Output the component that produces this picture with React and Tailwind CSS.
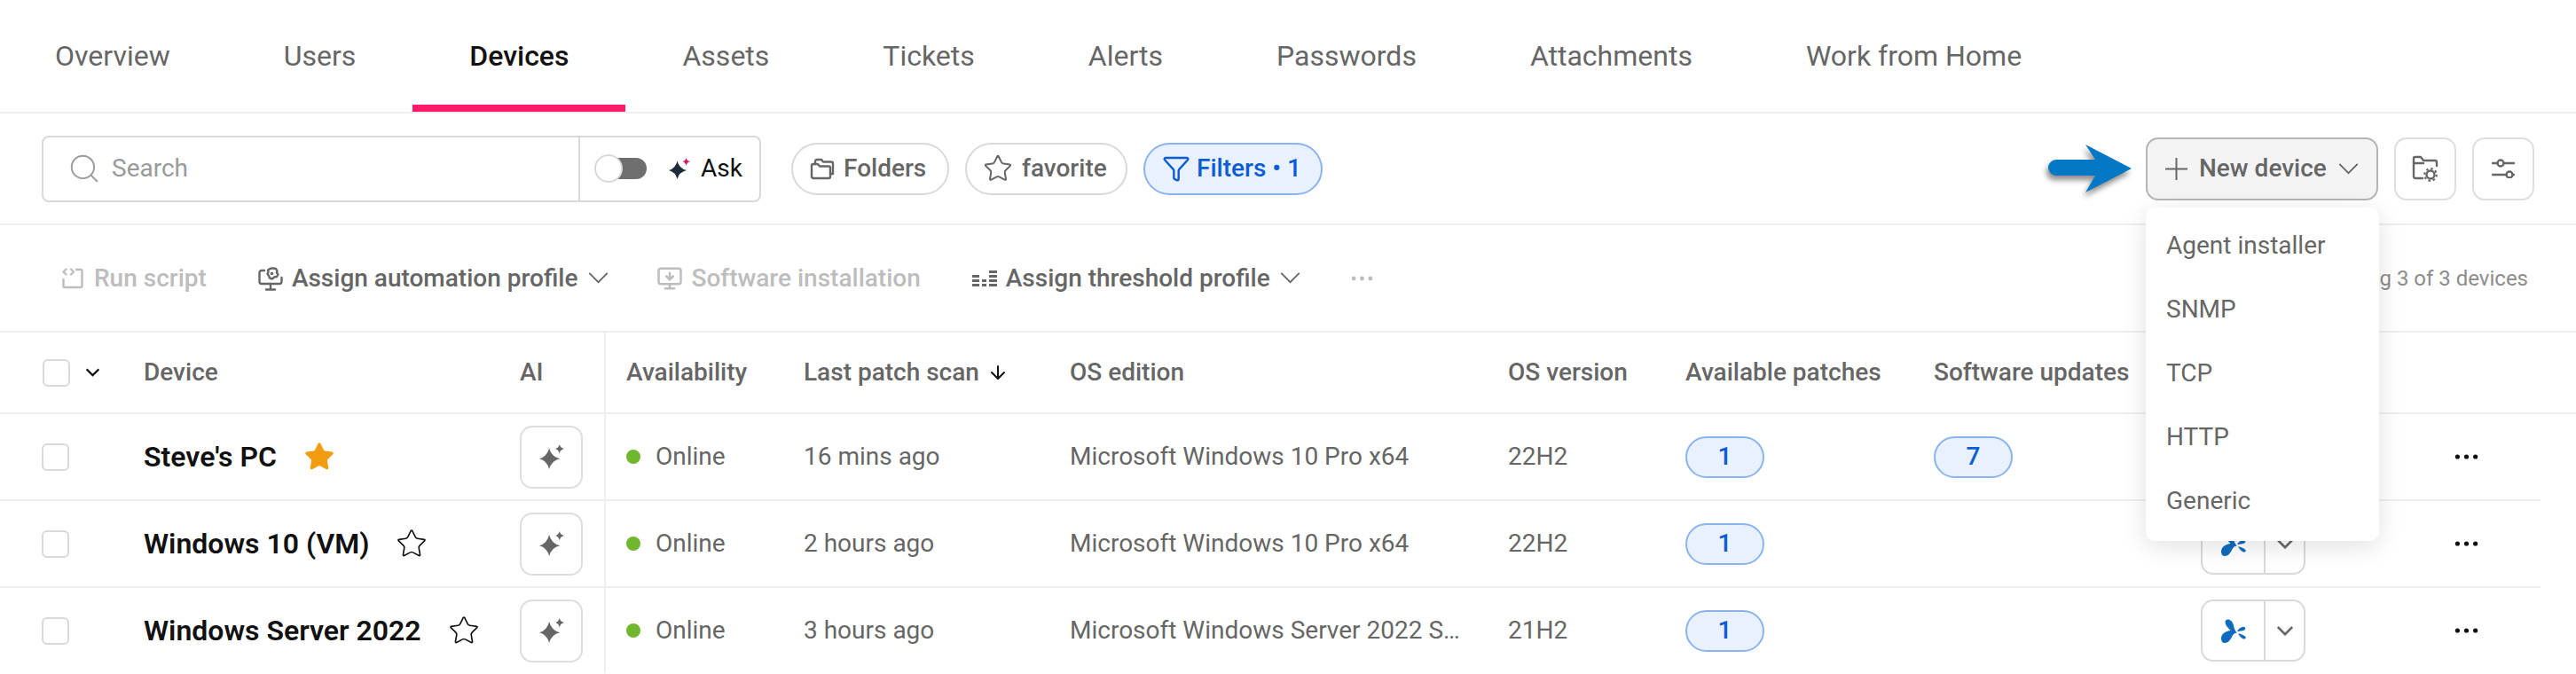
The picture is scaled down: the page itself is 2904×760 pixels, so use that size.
import React from "react";
import { Search, Star, Funnel, MonitorDown, ArrowDown } from "lucide-react";

const tabs = ["Overview", "Users", "Devices", "Assets", "Tickets", "Alerts", "Passwords", "Attachments", "Work from Home"];

const rows = [
  { name: "Steve's PC", starred: true, scan: "16 mins ago", os: "Microsoft Windows 10 Pro x64", ver: "22H2", patches: 1, updates: 7 },
  { name: "Windows 10 (VM)", scan: "2 hours ago", os: "Microsoft Windows 10 Pro x64", ver: "22H2", patches: 1 },
  { name: "Windows Server 2022", scan: "3 hours ago", os: "Microsoft Windows Server 2022 S…", ver: "21H2", patches: 1 },
];

const menuItems = ["Agent installer", "SNMP", "TCP", "HTTP", "Generic"];

const gridCols = "grid grid-cols-[162px_424px_95px_225px_300px_494px_200px_280px_301px_286px_97px]";

function Sparkle({ className, accent = "currentColor" }) {
  return (
    <svg viewBox="0 0 24 24" className={className} fill="currentColor">
      <path d="M9.500 3.500Q11.500 12 20 14Q11.500 16 9.500 24Q7.500 16 0 14Q7.500 12 9.500 3.500z" />
      <path d="M19.500 0Q20.200 3.300 24 4.200Q20.200 5 19.500 9Q18.800 5 15.500 4.200Q18.800 3.300 19.500 0z" fill={accent} />
    </svg>
  );
}

function Chevron({ className, strokeWidth = 2 }) {
  return (
    <svg viewBox="0 0 24 14" className={className} fill="none" stroke="currentColor" strokeWidth={strokeWidth}>
      <path d="M1 1l11 11L23 1" />
    </svg>
  );
}

function FoldersIcon({ className }) {
  return (
    <svg viewBox="0 0 28 25" className={className} fill="none" stroke="currentColor" strokeWidth="2.4" strokeLinejoin="round" strokeLinecap="round">
      <path d="M2 9a2 2 0 0 1 2-2h5l2 2.500h10a2 2 0 0 1 2 2V21a2 2 0 0 1-2 2H4a2 2 0 0 1-2-2z" />
      <path d="M6 7V4a2 2 0 0 1 2-2h5l2 2.500h9a2 2 0 0 1 2 2V18h-3" />
    </svg>
  );
}

function FolderGearIcon({ className }) {
  return (
    <svg viewBox="0 0 30 30" className={className} fill="none" stroke="currentColor" strokeWidth="2.4" strokeLinecap="round" strokeLinejoin="round">
      <path d="M12 26H4a2 2 0 0 1-2-2V3.500A1.500 1.500 0 0 1 3.500 2H10l3 4h13a2 2 0 0 1 2 2v4" />
      <path d="M2 9h11" />
      <circle cx="21" cy="22" r="4.500" />
      <circle cx="21" cy="22" r="6.800" strokeWidth="2.200" strokeDasharray="2.500 2.840" strokeLinecap="butt" />
    </svg>
  );
}

function SlidersIcon({ className }) {
  return (
    <svg viewBox="0 0 26 22" className={className} fill="none" stroke="currentColor" strokeWidth="2.4" strokeLinecap="round">
      <path d="M1 5h5.500M13.500 5H25M1 18h15.500M23.500 18H25" />
      <circle cx="10" cy="5" r="3.500" />
      <circle cx="20" cy="18" r="3.500" />
    </svg>
  );
}

function RunScriptIcon({ className }) {
  return (
    <svg viewBox="0 0 24 24" className={className} fill="none" stroke="currentColor" strokeWidth="2.4" strokeLinecap="round" strokeLinejoin="round">
      <path d="M16 2h5a1.500 1.500 0 0 1 1.500 1.500v17a1.500 1.500 0 0 1-1.500 1.500H3a1.500 1.500 0 0 1-1.500-1.500V13" />
      <path d="M4.500 1.500 1.500 4.500l3 3M10 1.500l3 3-3 3" />
    </svg>
  );
}

function AutomationIcon({ className }) {
  return (
    <svg viewBox="0 0 28 28" className={className} fill="none" stroke="currentColor" strokeWidth="2.4" strokeLinecap="round" strokeLinejoin="round">
      <path d="M7 5H4a2.500 2.500 0 0 0-2.500 2.500v10A2.500 2.500 0 0 0 4 20h20a2.500 2.500 0 0 0 2.500-2.500V13" />
      <path d="M14 20v5M9 26.500h10" />
      <path d="M17 2.500l3 .5 1.500 2.500-.5 2 1.500 2-1.500 2.500-3 .5-2 2-3-1-1-2.500-1.500-2 1-2.500-.5-2 2.500-1.500 2-.5z" />
      <circle cx="15.500" cy="8.500" r="1.800" fill="currentColor" stroke="none" />
    </svg>
  );
}

function ThresholdIcon({ className }) {
  const bars = [
    [0, 5, 8], [0, 10, 8], [0, 15, 8],
    [11, 10, 5], [11, 15, 5],
    [19, 0, 9], [19, 5, 9], [19, 10, 9], [19, 15, 9],
  ];
  return (
    <svg viewBox="0 0 28 18" className={className} fill="currentColor">
      {bars.map(([x, y, w], i) => (
        <rect key={i} x={x} y={y} width={w} height="3" />
      ))}
    </svg>
  );
}

function Dots({ className }) {
  return (
    <svg viewBox="0 0 28 8" className={className} fill="currentColor">
      <circle cx="3.500" cy="4" r="2.700" />
      <circle cx="14" cy="4" r="2.700" />
      <circle cx="24.500" cy="4" r="2.700" />
    </svg>
  );
}

function SplashLogo({ className }) {
  return (
    <svg viewBox="0 0 30 27" className={className} fill="#0f6cbd">
      <path d="M1 22C1 17 6 13.500 11.500 13C9 10 5.500 7 5.500 3.500C5.500 1 8 0 10.500 1C14 2.500 15 6.500 15.500 9.500C16 12 17.500 14 19 16C16.500 15.500 15.500 16.500 14 18.500C12 22 10 27 5 27C2.500 27 1 25 1 22z" />
      <path d="M19.500 13C21 11.500 24 8 27 9C29 9.800 28.500 12 26.500 12.800C24.500 13.500 22 14 19.500 14z" />
      <path d="M20 16.500C23 16.500 27 18.500 28.500 20C29.500 21.500 28 23 26 22.500C23.500 21.500 21.500 19 20 16.500z" />
    </svg>
  );
}

function Checkbox({ className = "" }) {
  return <div className={`w-[31px] h-[31px] rounded-[6px] border-2 border-[#d9d9d9] bg-white ${className}`} />;
}

function Chip({ icon, active, children, className = "" }) {
  return (
    <button className={`h-[59px] rounded-full border-2 flex items-center text-[28px] font-medium ${active ? "bg-[#e8f1fd] border-[#8ab4f0] text-[#0b5cd5]" : "bg-white border-[#d9d9d9] text-[#666666]"} ${className}`}>
      {icon}
      <span>{children}</span>
    </button>
  );
}

function Pill({ children }) {
  return (
    <span className="w-[89px] h-[47px] rounded-full border-2 border-[#8ab4f0] bg-[#e8f1fd] text-[#0b5cd5] font-medium flex items-center justify-center">
      {children}
    </span>
  );
}

export default function App() {
  return (
    <div className="relative w-[2904px] h-[760px] overflow-hidden bg-white text-[#666666] font-['Roboto','Liberation_Sans',sans-serif]">
      {/* tabs */}
      <div className="flex h-[128px] border-b-2 border-[#eeeeee]">
        {tabs.map((t) => (
          <div key={t} className={`px-[64px] first:pl-[62px] pt-[44px] h-[126px] text-[32px] leading-[38px] border-b-[8px] ${t === "Devices" ? "border-[#ff1a6c] text-[#111111] font-medium" : "border-transparent"}`}>
            {t}
          </div>
        ))}
      </div>

      {/* search row */}
      <div className="flex items-center h-[126px] border-b-2 border-[#eeeeee] pl-[47px] pr-[47px]">
        <div className="flex items-center w-[811px] h-[75px] rounded-[8px] border-2 border-[#d9d9d9]">
          <div className="flex items-center w-[605px] h-full pl-[27px] gap-[12px] text-[#9a9a9a] border-r-2 border-[#d9d9d9]">
            <Search className="w-[38px] h-[38px]" strokeWidth={1.2} />
            <span className="text-[28px]">Search</span>
          </div>
          <div className="flex items-center flex-1 pl-[17px]">
            <div className="relative w-[58px] h-[24px] rounded-full bg-[#6e6e6e]">
              <div className="absolute -left-[1px] -top-[4px] w-[32px] h-[32px] rounded-full bg-white border-2 border-[#d9d9d9]" />
            </div>
            <Sparkle className="w-[24px] h-[24px] ml-[25px] text-[#1d2b3f]" accent="#d81b60" />
            <span className="ml-[12px] text-[28px] text-[#111111]">Ask</span>
          </div>
        </div>
        <Chip className="ml-[34px] w-[178px] pl-[19px]" icon={<FoldersIcon className="w-[28px] h-[25px] mr-[10px]" />}>Folders</Chip>
        <Chip className="ml-[18px] w-[183px] pl-[18px]" icon={<Star className="w-[34px] h-[34px] mr-[10px]" strokeWidth={1.4} />}>favorite</Chip>
        <Chip active className="ml-[18px] w-[202px] pl-[19px]" icon={<Funnel className="w-[32px] h-[32px] mr-[7px]" strokeWidth={1.8} />}>Filters • 1</Chip>

        <div className="ml-auto flex items-center gap-[18px]">
          <button className="w-[262px] h-[71px] rounded-[14px] border-2 border-[#b5b5b5] bg-[#f4f4f4] flex items-center pl-[20px] text-[28px] font-medium">
            <svg viewBox="0 0 25 25" className="w-[25px] h-[25px]" fill="none" stroke="currentColor" strokeWidth="2">
              <path d="M12.500 0v25M0 12.500h25" />
            </svg>
            <span className="ml-[13px]">New device</span>
            <Chevron className="w-[23px] h-[13px] ml-[13px]" />
          </button>
          <button className="w-[70px] h-[71px] rounded-[14px] border-2 border-[#dedede] flex items-center justify-center">
            <FolderGearIcon className="w-[30px] h-[30px]" />
          </button>
          <button className="w-[70px] h-[71px] rounded-[14px] border-2 border-[#dedede] flex items-center justify-center">
            <SlidersIcon className="w-[26px] h-[22px]" />
          </button>
        </div>
      </div>

      {/* bulk actions */}
      <div className="flex items-center h-[121px] border-b-2 border-[#eeeeee] pl-[70px] pr-[54px] text-[28px] font-medium">
        <div className="flex items-center text-[#bdbdbd]">
          <RunScriptIcon className="w-[24px] h-[24px]" />
          <span className="ml-[12px]">Run script</span>
        </div>
        <div className="flex items-center ml-[58px]">
          <AutomationIcon className="w-[28px] h-[28px]" />
          <span className="ml-[10px]">Assign automation profile</span>
          <Chevron className="w-[23px] h-[13px] ml-[12px]" />
        </div>
        <div className="flex items-center ml-[54px] text-[#bdbdbd]">
          <MonitorDown className="w-[30px] h-[30px]" strokeWidth={2} />
          <span className="ml-[9px]">Software installation</span>
        </div>
        <div className="flex items-center ml-[58px]">
          <ThresholdIcon className="w-[28px] h-[18px]" />
          <span className="ml-[10px]">Assign threshold profile</span>
          <Chevron className="w-[23px] h-[13px] ml-[11px]" />
        </div>
        <Dots className="w-[25px] h-[8px] ml-[57px] text-[#bdbdbd]" />
        <span className="ml-auto text-[24px] font-normal text-[#8c8c8c]">Showing 3 of 3 devices</span>
      </div>

      {/* table header */}
      <div className={`${gridCols} w-full h-[92px] border-b-2 border-[#eeeeee] text-[28px] font-medium items-stretch`}>
        <div className="flex items-center pl-[48px]">
          <Checkbox />
          <Chevron className="w-[15px] h-[10px] ml-[18px] text-[#111111]" strokeWidth={3.5} />
        </div>
        <div className="flex items-center">Device</div>
        <div className="flex items-center">AI</div>
        <div className="flex items-center pl-[23px] border-l-2 border-[#f0f0f0]">Availability</div>
        <div className="flex items-center">
          Last patch scan
          <ArrowDown className="w-[24px] h-[24px] ml-[9px] text-[#111111]" strokeWidth={2} />
        </div>
        <div className="flex items-center">OS edition</div>
        <div className="flex items-center">OS version</div>
        <div className="flex items-center">Available patches</div>
        <div className="flex items-center">Software updates</div>
        <div />
        <div />
      </div>

      {/* table rows */}
      <div className="w-[2864px]">
        {rows.map((r, i) => (
          <div key={r.name} className={`${gridCols} h-[98px] text-[28px] items-stretch border-b-2 ${i < 2 ? "border-[#eeeeee]" : "border-transparent"}`}>
            <div className="flex items-center pl-[47px]">
              <Checkbox />
            </div>
            <div className="flex items-center text-[32px] font-semibold text-[#111111]">
              <span>{r.name}</span>
              {r.starred ? (
                <Star className="w-[36px] h-[36px] ml-[30px] text-[#f39c12]" fill="#f39c12" strokeWidth={1} />
              ) : (
                <Star className="w-[36px] h-[36px] ml-[30px] text-[#111111]" strokeWidth={1.1} />
              )}
            </div>
            <div className="flex items-center">
              <button className="w-[71px] h-[71px] rounded-[14px] border-2 border-[#dedede] flex items-center justify-center">
                <Sparkle className="w-[28px] h-[28px] text-[#666666]" />
              </button>
            </div>
            <div className="flex items-center pl-[23px] border-l-2 border-[#f0f0f0]">
              <span className="w-[16px] h-[16px] rounded-full bg-[#6fb82e]" />
              <span className="ml-[17px]">Online</span>
            </div>
            <div className="flex items-center">{r.scan}</div>
            <div className="flex items-center">{r.os}</div>
            <div className="flex items-center">{r.ver}</div>
            <div className="flex items-center">
              <Pill>{r.patches}</Pill>
            </div>
            <div className="flex items-center">
              {r.updates && <Pill>{r.updates}</Pill>}
            </div>
            <div className="flex items-center">
              <div className="flex w-[118px] h-[70px] rounded-[14px] border-2 border-[#d9d9d9]">
                <div className="w-[71px] flex items-center justify-center border-r-2 border-[#d9d9d9]">
                  <SplashLogo className="w-[30px] h-[27px]" />
                </div>
                <div className="flex-1 flex items-center justify-center">
                  <Chevron className="w-[18px] h-[11px]" strokeWidth={3.5} />
                </div>
              </div>
            </div>
            <div className="flex items-center">
              <Dots className="w-[27px] h-[8px] text-[#111111]" />
            </div>
          </div>
        ))}
      </div>

      {/* arrow callout over the page */}
      <svg viewBox="0 0 110 70" className="absolute left-[2300px] top-[155px] w-[110px] h-[70px] drop-shadow-[-2px_5px_3px_rgba(0,0,0,0.45)]">
        <path d="M18 25h44L51 8l52 27-52 27 11-19H18a9 9 0 0 1 0-18z" fill="#0478c4" />
      </svg>

      {/* new device menu */}
      <div className="absolute left-[2419px] top-[234px] w-[263px] h-[376px] rounded-[10px] bg-white py-[7px] shadow-[0_6px_28px_rgba(0,0,0,0.12)] text-[28px]">
        {menuItems.map((m) => (
          <div key={m} className="h-[72px] flex items-center pl-[23px]">{m}</div>
        ))}
      </div>
    </div>
  );
}
